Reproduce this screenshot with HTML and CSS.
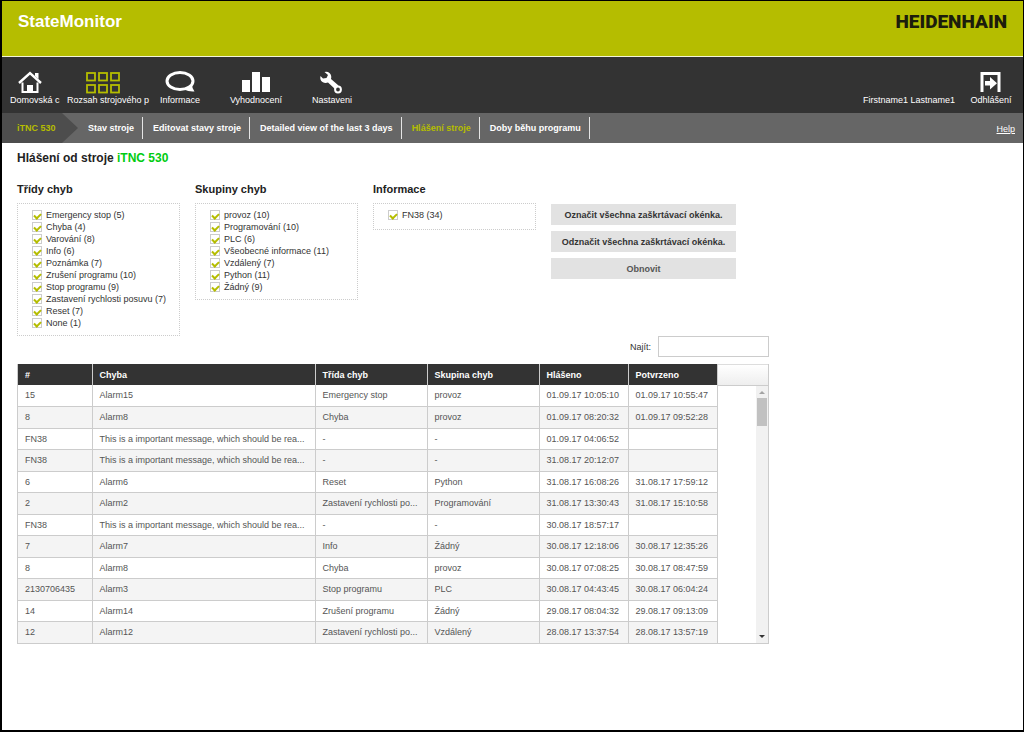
FILE: index.html
```html
<!DOCTYPE html>
<html lang="cs">
<head>
  <meta charset="UTF-8">
  <meta name="viewport" content="width=device-width, initial-scale=1.0">
  <title>StateMonitor</title>
  <link rel="stylesheet" href="styles.css">
</head>
<body>
  <header class="header">
    <div class="product">StateMonitor</div>
    <div class="brand">HEIDENHAIN</div>
  </header>

  <nav class="main-nav">
    <a href="#" class="nav-item nav-home">
      <svg width="40" height="24" viewBox="0 0 40 24">
        <path d="M9 13 L20 3 L31 13" fill="none" stroke="#fff" stroke-width="2.400"/>
        <path d="M25 3h3.500v6l-3.500-3z" fill="#fff"/>
        <path d="M12.500 12.500V22H27.500V12.500" fill="none" stroke="#fff" stroke-width="2"/>
        <path d="M17 15h6v8h-6z" fill="#fff"/>
      </svg>
      <span>Domovská c</span>
    </a>
    <a href="#" class="nav-item nav-machines active">
      <svg width="72" height="24" viewBox="0 0 72 24" fill="none" stroke="#b5bd00" stroke-width="1.800">
        <rect x="20" y="3" width="8" height="7.500"/>
        <rect x="32" y="3" width="8" height="7.500"/>
        <rect x="44" y="3" width="8" height="7.500"/>
        <rect x="20" y="15" width="8" height="7.500"/>
        <rect x="32" y="15" width="8" height="7.500"/>
        <rect x="44" y="15" width="8" height="7.500"/>
      </svg>
      <span>Rozsah strojového p</span>
    </a>
    <a href="#" class="nav-item">
      <svg width="40" height="24" viewBox="0 0 40 24">
        <ellipse cx="20" cy="11" rx="13" ry="8.500" fill="none" stroke="#fff" stroke-width="3"/>
        <path d="M24 19.500 L32 14.500 Q32 18.500 34.500 21.500 Q29 22 24 19.500z" fill="#fff"/>
      </svg>
      <span>Informace</span>
    </a>
    <a href="#" class="nav-item">
      <svg width="40" height="24" viewBox="0 0 40 24" fill="#fff">
        <rect x="6" y="10" width="8" height="12"/>
        <rect x="16" y="2" width="8" height="20"/>
        <rect x="26" y="7" width="8" height="15"/>
      </svg>
      <span>Vyhodnocení</span>
    </a>
    <a href="#" class="nav-item">
      <svg width="40" height="24" viewBox="0 0 40 24">
        <path d="M12.500 2 L16 5 L14.500 8 L11 8.500 L8.500 6 Q7.500 10 10.500 12 Q13 13.500 16 12.500 L23 19 L26.500 15.500 L19 9 Q20 5.500 17.500 3 Q15.500 1.300 12.500 2z" fill="#fff"/>
        <circle cx="26" cy="19.500" r="2.900" fill="#333" stroke="#fff" stroke-width="2"/>
      </svg>
      <span>Nastaveni</span>
    </a>
    <div class="user-name">Firstname1 Lastname1</div>
    <a href="#" class="nav-item nav-logout">
      <svg width="40" height="24" viewBox="0 0 40 24">
        <path d="M11 22V3.500H28V22" fill="none" stroke="#fff" stroke-width="3"/>
        <path d="M14 11h5V7L26 13.200L19 19.500V15.500H14z" fill="#fff"/>
      </svg>
      <span>Odhlášení</span>
    </a>
  </nav>

  <nav class="sub-nav">
    <a href="#" class="machine">iTNC 530</a>
    <a href="#" class="tab">Stav stroje</a>
    <a href="#" class="tab">Editovat stavy stroje</a>
    <a href="#" class="tab">Detailed view of the last 3 days</a>
    <a href="#" class="tab active">Hlášení stroje</a>
    <a href="#" class="tab">Doby běhu programu</a>
    <a href="#" class="help">Help</a>
  </nav>

  <main class="content">
    <h1>Hlášení od stroje <span>iTNC 530</span></h1>

    <form class="filters">
      <section class="filter">
        <h2>Třídy chyb</h2>
        <div class="filter-box">
          <label><input type="checkbox" checked>Emergency stop (5)</label>
          <label><input type="checkbox" checked>Chyba (4)</label>
          <label><input type="checkbox" checked>Varování (8)</label>
          <label><input type="checkbox" checked>Info (6)</label>
          <label><input type="checkbox" checked>Poznámka (7)</label>
          <label><input type="checkbox" checked>Zrušení programu (10)</label>
          <label><input type="checkbox" checked>Stop programu (9)</label>
          <label><input type="checkbox" checked>Zastavení rychlosti posuvu (7)</label>
          <label><input type="checkbox" checked>Reset (7)</label>
          <label><input type="checkbox" checked>None (1)</label>
        </div>
      </section>
      <section class="filter">
        <h2>Skupiny chyb</h2>
        <div class="filter-box">
          <label><input type="checkbox" checked>provoz (10)</label>
          <label><input type="checkbox" checked>Programování (10)</label>
          <label><input type="checkbox" checked>PLC (6)</label>
          <label><input type="checkbox" checked>Všeobecné informace (11)</label>
          <label><input type="checkbox" checked>Vzdálený (7)</label>
          <label><input type="checkbox" checked>Python (11)</label>
          <label><input type="checkbox" checked>Žádný (9)</label>
        </div>
      </section>
      <section class="filter">
        <h2>Informace</h2>
        <div class="filter-box">
          <label><input type="checkbox" checked>FN38 (34)</label>
        </div>
      </section>
      <div class="filter-buttons">
        <button type="button">Označit všechna zaškrtávací okénka.</button>
        <button type="button">Odznačit všechna zaškrtávací okénka.</button>
        <button type="submit" class="refresh">Obnovit</button>
      </div>
    </form>

    <div class="messages">
      <div class="search">
        <label for="search">Najít:</label>
        <input type="text" id="search" name="search">
      </div>

      <div class="grid">
        <table>
          <colgroup>
            <col class="col-id">
            <col class="col-error">
            <col class="col-class">
            <col class="col-class">
            <col class="col-date">
            <col class="col-date">
          </colgroup>
          <thead>
            <tr><th>#</th><th>Chyba</th><th>Třída chyb</th><th>Skupina chyb</th><th>Hlášeno</th><th>Potvrzeno</th></tr>
          </thead>
          <tbody>
            <tr><td>15</td><td>Alarm15</td><td>Emergency stop</td><td>provoz</td><td>01.09.17 10:05:10</td><td>01.09.17 10:55:47</td></tr>
            <tr><td>8</td><td>Alarm8</td><td>Chyba</td><td>provoz</td><td>01.09.17 08:20:32</td><td>01.09.17 09:52:28</td></tr>
            <tr><td>FN38</td><td>This is a important message, which should be rea...</td><td>-</td><td>-</td><td>01.09.17 04:06:52</td><td></td></tr>
            <tr><td>FN38</td><td>This is a important message, which should be rea...</td><td>-</td><td>-</td><td>31.08.17 20:12:07</td><td></td></tr>
            <tr><td>6</td><td>Alarm6</td><td>Reset</td><td>Python</td><td>31.08.17 16:08:26</td><td>31.08.17 17:59:12</td></tr>
            <tr><td>2</td><td>Alarm2</td><td>Zastavení rychlosti po...</td><td>Programování</td><td>31.08.17 13:30:43</td><td>31.08.17 15:10:58</td></tr>
            <tr><td>FN38</td><td>This is a important message, which should be rea...</td><td>-</td><td>-</td><td>30.08.17 18:57:17</td><td></td></tr>
            <tr><td>7</td><td>Alarm7</td><td>Info</td><td>Žádný</td><td>30.08.17 12:18:06</td><td>30.08.17 12:35:26</td></tr>
            <tr><td>8</td><td>Alarm8</td><td>Chyba</td><td>provoz</td><td>30.08.17 07:08:25</td><td>30.08.17 08:47:59</td></tr>
            <tr><td>2130706435</td><td>Alarm3</td><td>Stop programu</td><td>PLC</td><td>30.08.17 04:43:45</td><td>30.08.17 06:04:24</td></tr>
            <tr><td>14</td><td>Alarm14</td><td>Zrušení programu</td><td>Žádný</td><td>29.08.17 08:04:32</td><td>29.08.17 09:13:09</td></tr>
            <tr><td>12</td><td>Alarm12</td><td>Zastavení rychlosti po...</td><td>Vzdálený</td><td>28.08.17 13:37:54</td><td>28.08.17 13:57:19</td></tr>
          </tbody>
        </table>
        <div class="grid-side">
          <div class="grid-side-head"></div>
          <div class="scrollbar">
            <svg width="12" height="12" viewBox="0 0 12 12"><path d="M3 8L6 5L9 8z" fill="#a3a3a3"/></svg>
            <div class="thumb"></div>
            <svg width="12" height="12" viewBox="0 0 12 12"><path d="M3 4L6 7L9 4z" fill="#333"/></svg>
          </div>
        </div>
      </div>
    </div>
  </main>
</body>
</html>
```

FILE: styles.css
```css
* {
  box-sizing: border-box;
}
body {
  margin: 0;
  min-height: 100vh;
  border: 1px solid #000;
  border-left-width: 2px;
  border-bottom-width: 2px;
  background-color: #fff;
  font-family: "Liberation Sans", Arial, sans-serif;
  font-size: 9px;
  line-height: 12px;
  color: #333;
}
a {
  color: inherit;
  text-decoration: none;
}

/* header */
.header {
  display: flex;
  justify-content: space-between;
  height: 56px;
  padding: 11px 16px 0;
  border-bottom: 1px solid #f4f5d8;
  background-color: #b5bd00;
  line-height: 20px;
}
.product {
  font-size: 17px;
  font-weight: bold;
  color: #fff;
}
.brand {
  font-family: Roboto, "Liberation Sans", sans-serif;
  font-size: 19px;
  font-weight: 900;
  color: #1d1d0c;
}

/* main navigation */
.main-nav {
  display: flex;
  align-items: flex-end;
  height: 56px;
  padding: 0 8px;
  background-color: #333;
  color: #fff;
}
.nav-item {
  display: flex;
  flex-direction: column;
  align-items: center;
  width: 64px;
  margin-right: 12px;
  padding-bottom: 7px;
  white-space: nowrap;
}
.nav-home {
  align-items: flex-start;
  width: 48px;
  margin-right: 9px;
}
.nav-machines {
  align-items: flex-start;
  width: 81px;
  margin-right: 0;
}
.nav-logout {
  width: 48px;
  margin-right: 0;
}
.user-name {
  margin-left: auto;
  padding: 0 12px 7px 0;
}

/* machine navigation */
.sub-nav {
  display: flex;
  align-items: center;
  height: 30px;
  background-color: #666;
  color: #fff;
  font-weight: bold;
}
.machine {
  width: 76px;
  padding-left: 15px;
  background-color: #4d4d4d;
  clip-path: polygon(0 0, 60px 0, 100% 50%, 60px 100%, 0 100%);
  line-height: 30px;
  color: #b5bd00;
}
.tab {
  padding: 0 8px 0 10px;
  border-right: 1px solid #e5e5e5;
  line-height: 22px;
}
.tab.active {
  color: #b5bd00;
}
.help {
  margin-left: auto;
  padding: 2px 8px 0 0;
  font-weight: normal;
  text-decoration: underline;
}

/* content */
.content {
  padding: 7px 15px 0;
}
h1 {
  margin: 0;
  font-size: 12px;
  line-height: 16px;
  color: #222;
}
h1 span {
  color: #0c1;
}
h2 {
  margin: 0 0 8px;
  font-size: 11px;
  line-height: 12px;
  color: #222;
}
.filters {
  display: flex;
  align-items: flex-start;
  gap: 15px;
  margin-top: 17px;
}
.filter {
  width: 163px;
}
.filter-box {
  display: flex;
  flex-direction: column;
  min-height: 27px;
  padding: 5px 0 6px 14px;
  border: 1px dotted #ccc;
}
.filter-box label {
  display: flex;
  align-items: center;
  gap: 4px;
  height: 12px;
  white-space: nowrap;
}
.filter-box input {
  display: flex;
  justify-content: center;
  appearance: none;
  width: 10px;
  height: 10px;
  margin: 0;
  border: 1px solid #ccc;
  background-color: #fff;
}
.filter-box input:checked::after {
  content: "";
  width: 3px;
  height: 5px;
  margin-top: 1px;
  border: solid #b5bd00;
  border-width: 0 2px 2px 0;
  transform: rotate(45deg);
}
.filter-buttons {
  display: flex;
  flex-direction: column;
  gap: 6px;
  width: 185px;
  padding-top: 21px;
}
button {
  height: 21px;
  padding: 0;
  border: none;
  background-color: #e2e2e2;
  font: bold 9px "Liberation Sans", Arial, sans-serif;
  color: #333;
  white-space: nowrap;
  cursor: pointer;
}
.refresh {
  color: #555;
}

/* message list */
.messages {
  width: 752px;
}
.search {
  display: flex;
  justify-content: flex-end;
  align-items: center;
  gap: 7px;
  margin-bottom: 7px;
}
.search input {
  width: 111px;
  height: 21px;
  padding: 2px 4px;
  border: 1px solid #ccc;
  font: inherit;
}
.grid {
  display: flex;
  border: 1px solid #ccc;
  border-top: none;
}
table {
  width: 699px;
  table-layout: fixed;
  border-collapse: collapse;
  color: #555;
}
.col-id {
  width: 74px;
}
.col-error {
  width: 223px;
}
.col-class {
  width: 112px;
}
.col-date {
  width: 89px;
}
th, td {
  padding: 0 6px 0 7px;
  border-right: 1px solid #ccc;
  text-align: left;
  white-space: nowrap;
}
td {
  border-bottom: 1px solid #ccc;
}
tbody tr {
  height: 21px;
}
tbody tr:nth-child(even) {
  height: 22px;
  background-color: #f4f4f4;
}
tbody tr:last-child td {
  border-bottom: none;
}
th {
  height: 21px;
  background-color: #333;
  color: #fff;
}
.grid-side {
  display: flex;
  flex: 1;
  flex-direction: column;
}
.grid-side-head {
  height: 22px;
  border-top: 1px solid #ddd;
  border-bottom: 1px solid #ccc;
  background: linear-gradient(#fff, #eee);
}
.scrollbar {
  display: flex;
  flex: 1;
  flex-direction: column;
  align-items: center;
  align-self: flex-end;
  width: 12px;
  background-color: #f1f1f1;
}
.thumb {
  width: 10px;
  height: 28px;
  margin-bottom: auto;
  background-color: #c1c1c1;
}
```
